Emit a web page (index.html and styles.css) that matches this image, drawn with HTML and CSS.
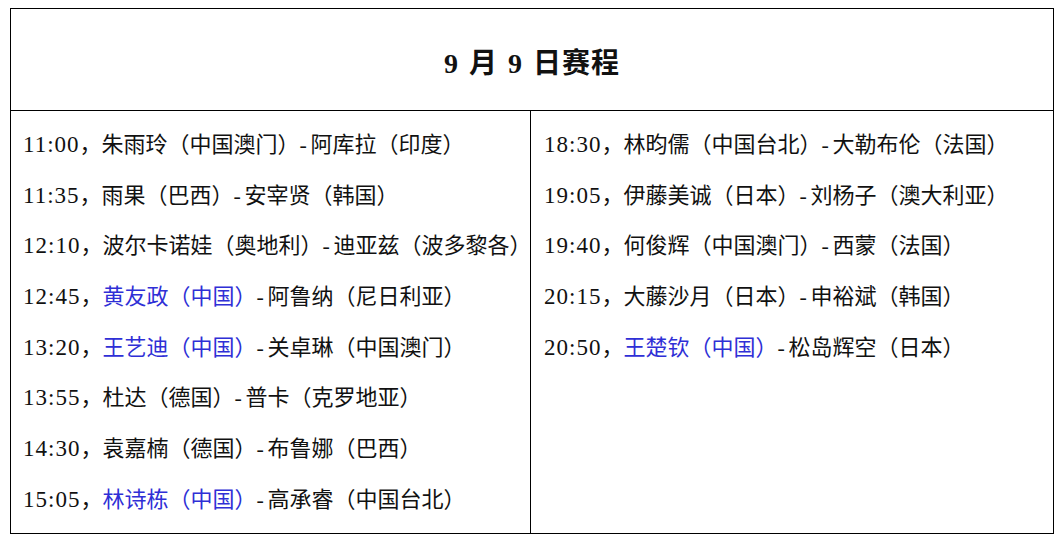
FILE: index.html
```html
<!DOCTYPE html>
<html lang="zh-CN">
<head>
<meta charset="utf-8">
<title>9月9日赛程</title>
<link rel="stylesheet" href="styles.css">
</head>
<body>
<div class="sheet">
  <div class="head"><h1 class="title">9 月 9 日赛程</h1></div>
  <div class="body">
    <div class="col left">
      <p class="row"><span class="t">11:00</span>，朱雨玲（中国澳门）<span class="d">-</span>阿库拉（印度）</p>
      <p class="row"><span class="t">11:35</span>，雨果（巴西）<span class="d">-</span>安宰贤（韩国）</p>
      <p class="row"><span class="t">12:10</span>，波尔卡诺娃（奥地利）<span class="d">-</span>迪亚兹（波多黎各）</p>
      <p class="row"><span class="t">12:45</span>，<span class="cn">黄友政（中国）</span><span class="d">-</span>阿鲁纳（尼日利亚）</p>
      <p class="row"><span class="t">13:20</span>，<span class="cn">王艺迪（中国）</span><span class="d">-</span>关卓琳（中国澳门）</p>
      <p class="row"><span class="t">13:55</span>，杜达（德国）<span class="d">-</span>普卡（克罗地亚）</p>
      <p class="row"><span class="t">14:30</span>，袁嘉楠（德国）<span class="d">-</span>布鲁娜（巴西）</p>
      <p class="row"><span class="t">15:05</span>，<span class="cn">林诗栋（中国）</span><span class="d">-</span>高承睿（中国台北）</p>
    </div>
    <div class="col right">
      <p class="row"><span class="t">18:30</span>，林昀儒（中国台北）<span class="d">-</span>大勒布伦（法国）</p>
      <p class="row"><span class="t">19:05</span>，伊藤美诚（日本）<span class="d">-</span>刘杨子（澳大利亚）</p>
      <p class="row"><span class="t">19:40</span>，何俊辉（中国澳门）<span class="d">-</span>西蒙（法国）</p>
      <p class="row"><span class="t">20:15</span>，大藤沙月（日本）<span class="d">-</span>申裕斌（韩国）</p>
      <p class="row"><span class="t">20:50</span>，<span class="cn">王楚钦（中国）</span><span class="d">-</span>松岛辉空（日本）</p>
    </div>
  </div>
</div>
</body>
</html>
```
FILE: styles.css
```css
html, body {
  margin: 0;
  padding: 0;
  background: #ffffff;
}
body {
  font-family: "Liberation Serif", "Noto Sans CJK SC", serif;
  color: #111111;
}
.sheet {
  margin: 8px 0 0 10px;
  width: 1044px;
  height: 526px;
  box-sizing: border-box;
  border: 1px solid #000000;
  display: flex;
  flex-direction: column;
}
.head {
  height: 102px;
  flex: none;
  box-sizing: border-box;
  border-bottom: 1px solid #000000;
  display: flex;
  align-items: center;
  justify-content: center;
}
.title {
  margin: 0;
  padding-top: 2px;
  font-size: 28px;
  font-weight: bold;
  letter-spacing: 1px;
  word-spacing: 2px;
  font-family: "Liberation Serif", "Noto Sans CJK SC", serif;
}
.body {
  flex: 1;
  display: grid;
  grid-template-columns: 520px 1fr;
}
.col {
  padding-top: 9px;
}
.left {
  border-right: 1px solid #000000;
  padding-left: 12px;
}
.right {
  padding-left: 13px;
}
.row {
  margin: 0;
  height: 50.7px;
  line-height: 50.7px;
  font-size: 22px;
  white-space: nowrap;
}
.t {
  letter-spacing: 1px;
  font-size: 23px;
}
.d {
  display: inline-block;
  width: 11px;
}
.cn {
  color: #2f2fd6;
}
```
